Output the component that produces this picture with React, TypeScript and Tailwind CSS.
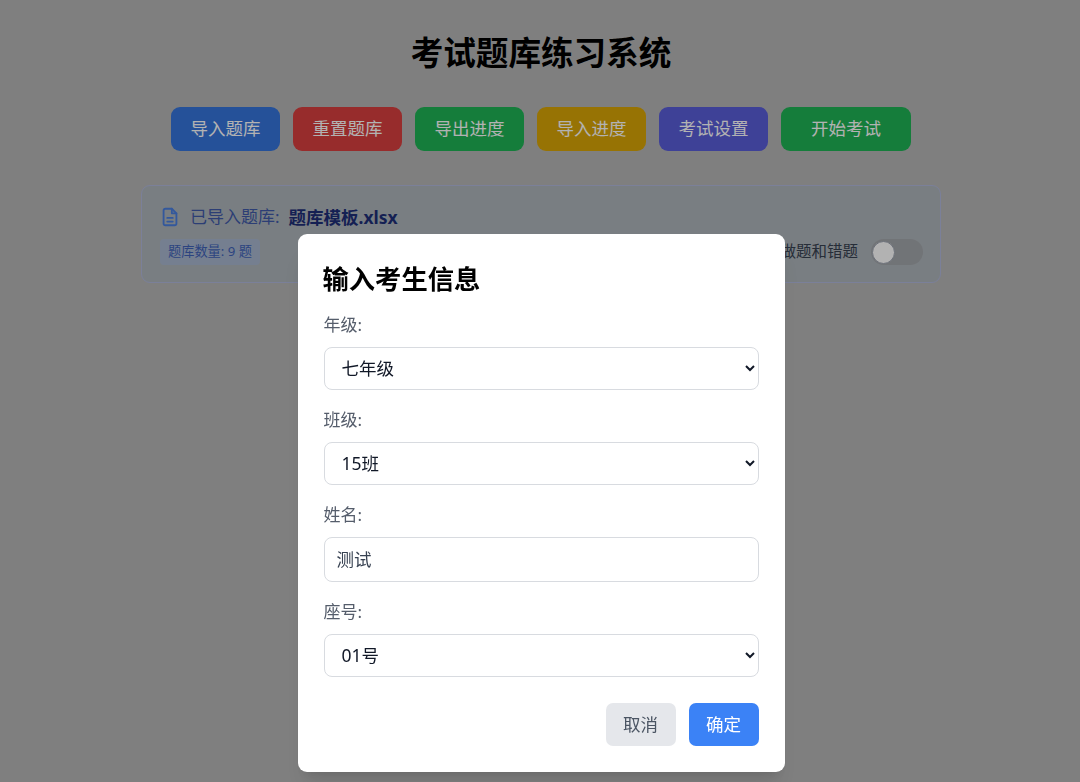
const font = 'font-["Noto_Sans","Noto_Sans_CJK_SC",sans-serif]';

const topButtons = [
  { label: '导入题库', color: 'bg-[#3574dc]', width: 'w-[109px]' },
  { label: '重置题库', color: 'bg-[#d93f3f]', width: 'w-[109px]' },
  { label: '导出进度', color: 'bg-[#1fb355]', width: 'w-[109px]' },
  { label: '导入进度', color: 'bg-[#d9a507]', width: 'w-[109px]' },
  { label: '考试设置', color: 'bg-[#5a5dd9]', width: 'w-[109px]' },
  { label: '开始考试', color: 'bg-[#1fb355]', width: 'w-[130px]' },
];

function Field({ label, children }: { label: string; children: React.ReactNode }) {
  return (
    <div className="mb-[19px]">
      <label className="block mb-[11px] text-[17px] leading-[22px] text-[#555d6b]">{label}</label>
      {children}
    </div>
  );
}

function Select({ value, options }: { value: string; options: string[] }) {
  return (
    <select
      defaultValue={value}
      className="block w-full h-[43px] pl-[13px] pr-[11px] pb-[2px] bg-white border border-[#d8dbe0] rounded-[8px] text-[17.5px] text-[#111827] outline-none"
    >
      {options.map(o => (
        <option key={o}>{o}</option>
      ))}
    </select>
  );
}

export default function App() {
  return (
    <div className={`${font} relative h-[782px] overflow-hidden bg-[#b7b7b7] pl-[2px]`}>
      <h1 className="pt-[32px] text-center text-[32.6px] leading-[42px] font-bold text-black">考试题库练习系统</h1>

      <div className="mt-[33px] flex justify-center gap-[13px]">
        {topButtons.map(b => (
          <button key={b.label} className={`${b.color} ${b.width} h-[44px] pb-[2px] rounded-[9px] text-[17.5px] text-white`}>
            {b.label}
          </button>
        ))}
      </div>

      <div className="mx-auto mt-[34px] w-[800px] h-[98px] rounded-[9px] border border-[#b0b8dc] bg-[#aeb5ba] pl-[20px] pr-[17px] pt-[19px]">
        <div className="flex items-center h-[24px] text-[17px] text-[#3f5aa8]">
          <svg className="-ml-[3px]" width="22" height="22" viewBox="0 0 24 24" fill="none" stroke="#4a7fe0" strokeWidth="2" strokeLinecap="round" strokeLinejoin="round">
            <path d="M14 3H7a2 2 0 0 0-2 2v14a2 2 0 0 0 2 2h10a2 2 0 0 0 2-2V8z" />
            <path d="M14 3v5h5" />
            <path d="M9 13h6M9 17h6" />
          </svg>
          <span className="ml-[9px]">已导入题库:</span>
          <span className="ml-[9px] text-[17.5px] font-bold text-[#1e2f78]">题库模板.xlsx</span>
        </div>
        <div className="mt-[10px] flex items-center justify-between">
          <span className="flex items-center justify-center w-[100px] h-[26px] -ml-[2px] rounded-[4px] bg-[#a8b7cf] text-[13.2px] text-[#3f62b8]">题库数量: 9 题</span>
          <div className="flex items-center gap-[13px]">
            <span className="text-[15.5px] text-[#374151]">显示已做题和错题</span>
            <div className="relative w-[52px] h-[26px] rounded-full bg-[#a3a6ab]">
              <span className="absolute left-[1px] top-[2px] w-[23px] h-[23px] rounded-full bg-white border border-[#9ca3af]" />
            </div>
          </div>
        </div>
      </div>

      {/* 弹窗 */}
      <div className="fixed inset-0 bg-black/30 pl-[2px] pt-[234px] flex justify-center items-start">
        <div className="w-[487px] h-[538px] rounded-[9px] bg-white shadow-xl p-[26px]">
          <h2 className="mb-[16px] -ml-[1px] text-[26.3px] leading-[38px] font-bold text-black">输入考生信息</h2>
          <Field label="年级:">
            <Select value="七年级" options={['七年级', '八年级', '九年级']} />
          </Field>
          <Field label="班级:">
            <Select value="15班" options={['14班', '15班', '16班']} />
          </Field>
          <Field label="姓名:">
            <input
              type="text"
              defaultValue="测试"
              className="block w-full h-[45px] px-[12px] pb-[2px] bg-white border border-[#d8dbe0] rounded-[8px] text-[17.5px] text-[#374151] outline-none"
            />
          </Field>
          <Field label="座号:">
            <Select value="01号" options={['01号', '02号', '03号']} />
          </Field>
          <div className="mt-[26px] flex justify-end gap-[13px]">
            <button className="w-[70px] h-[43px] rounded-[7px] bg-[#e5e7eb] text-[17.5px] text-[#4b5563]">取消</button>
            <button className="w-[70px] h-[43px] rounded-[7px] bg-[#3b82f6] text-[17.5px] text-white">确定</button>
          </div>
        </div>
      </div>
    </div>
  );
}
